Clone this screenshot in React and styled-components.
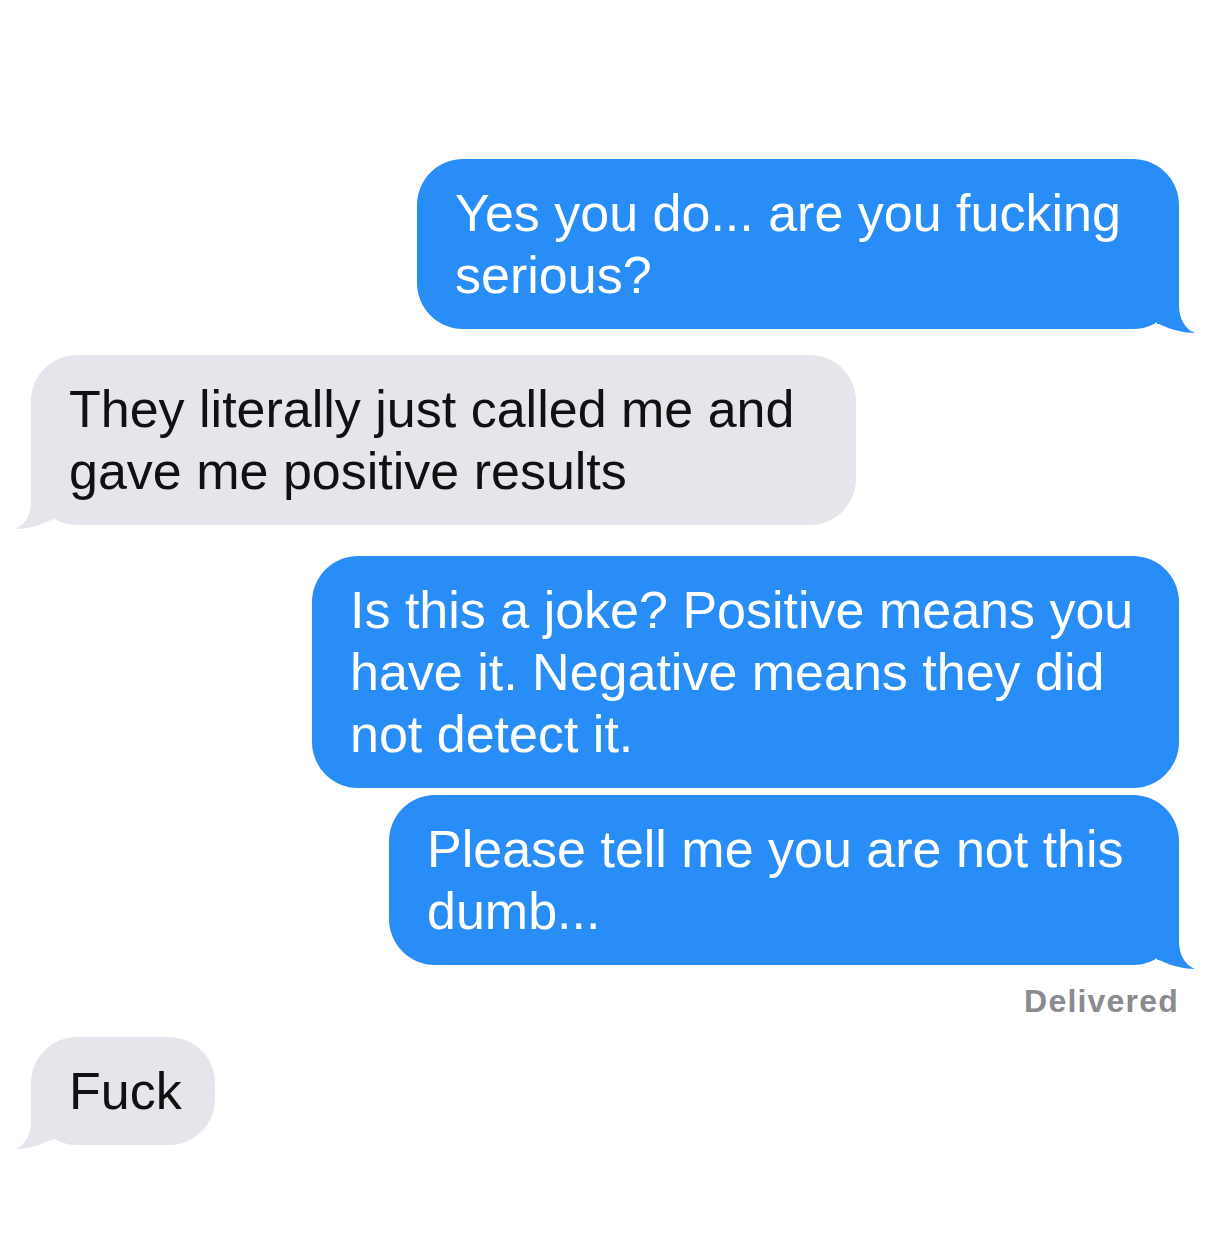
import React from 'react';
import styled, { createGlobalStyle } from 'styled-components';

const GlobalStyle = createGlobalStyle`
  html, body {
    margin: 0;
    padding: 0;
    background: #fff;
  }
  body {
    font-family: "Liberation Sans", Arial, sans-serif;
  }
`;

const colors = {
  me: '#288df6',
  them: '#e6e5eb',
};

const Thread = styled.div`
  display: flex;
  flex-direction: column;
  box-sizing: border-box;
  min-height: 1249px;
  padding: 159px 37px 80px 31px;
`;

const Row = styled.div`
  display: flex;
  justify-content: ${p => (p.$me ? 'flex-end' : 'flex-start')};
  margin-top: ${p => p.$gap || 0}px;
`;

const Bubble = styled.div`
  position: relative;
  box-sizing: border-box;
  width: ${p => p.$w}px;
  padding: 23px 0 23px 38px;
  border-radius: 46px;
  background: ${p => (p.$me ? colors.me : colors.them)};
  color: ${p => (p.$me ? '#fff' : '#111')};
  font-size: 52px;
  line-height: 62px;
  white-space: nowrap;
`;

const TailSvg = styled.svg`
  position: absolute;
  bottom: -4px;
  ${p => (p.$me ? 'right: -18px;' : 'left: -18px; transform: scaleX(-1);')}
`;

const Status = styled.div`
  align-self: flex-end;
  margin-top: 18px;
  font-size: 32px;
  line-height: 36px;
  font-weight: 700;
  letter-spacing: 1.2px;
  color: #8a8a8f;
`;

const Tail = ({ me }) => (
  <TailSvg $me={me} width="48" height="52" viewBox="0 0 48 52">
    <path
      d="M30 0 L30 24 C30 38 36 48 46 52 C36 52 22 49 10 43 L8 43 L8 0 Z"
      fill={me ? colors.me : colors.them}
    />
  </TailSvg>
);

const Message = ({ me, w, gap, tail, lines }) => (
  <Row $me={me} $gap={gap}>
    <Bubble $me={me} $w={w}>
      {lines.map((l, i) => (
        <div key={i}>{l}</div>
      ))}
      {tail && <Tail me={me} />}
    </Bubble>
  </Row>
);

export default function App() {
  return (
    <>
      <GlobalStyle />
      <Thread>
        <Message me w={762} tail lines={['Yes you do... are you fucking', 'serious?']} />
        <Message
          w={825}
          gap={26}
          tail
          lines={['They literally just called me and', 'gave me positive results']}
        />
        <Message
          me
          w={867}
          gap={31}
          lines={[
            'Is this a joke? Positive means you',
            'have it. Negative means they did',
            'not detect it.',
          ]}
        />
        <Message me w={790} gap={7} tail lines={['Please tell me you are not this', 'dumb...']} />
        <Status>Delivered</Status>
        <Message w={184} gap={18} tail lines={['Fuck']} />
      </Thread>
    </>
  );
}
